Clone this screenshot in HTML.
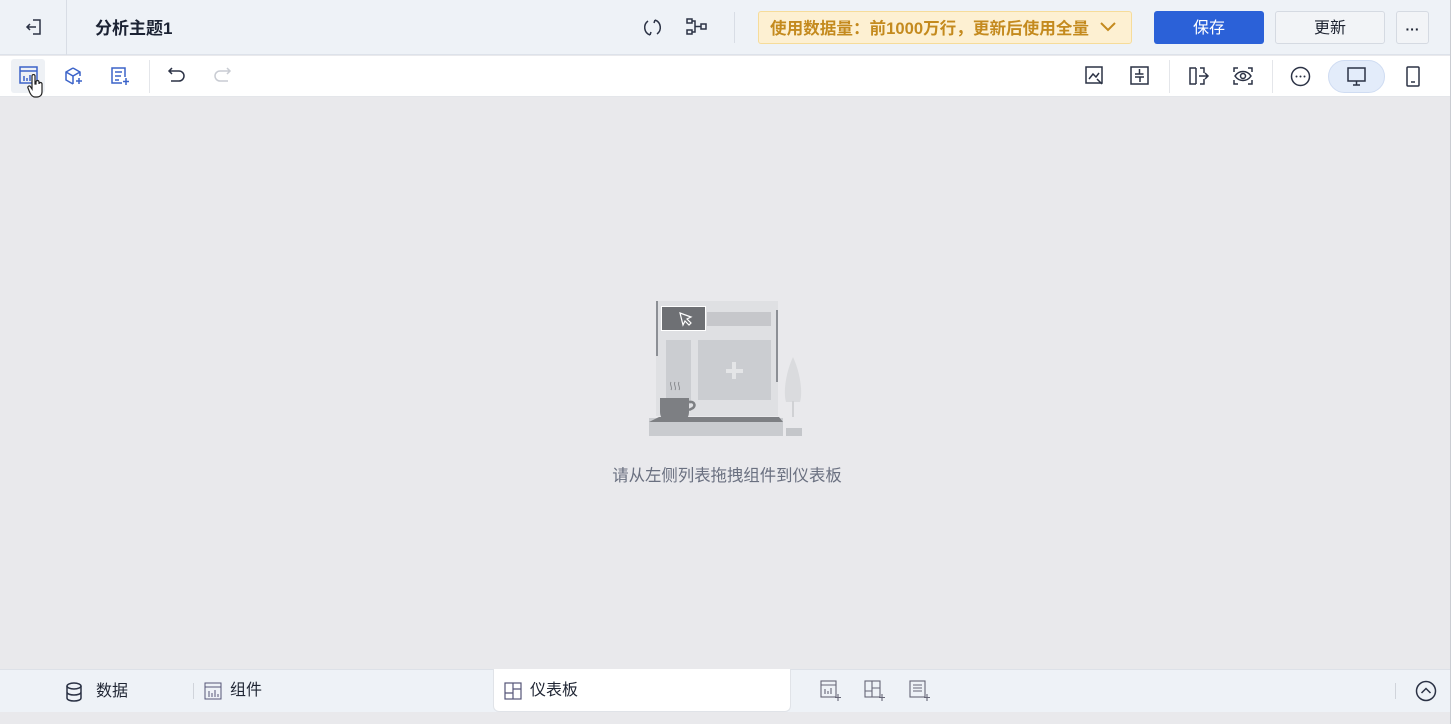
<!DOCTYPE html>
<html><head><meta charset="utf-8"><style>
*{box-sizing:border-box;margin:0;padding:0}
body{width:1454px;height:724px;overflow:hidden;background:#e9e9ec;font-family:"Liberation Sans","Noto Sans CJK SC",sans-serif;position:relative;color:#1f2533}
.abs{position:absolute}
svg{position:absolute;fill:none;stroke:#2b3245;stroke-width:1.5}
.btn{position:absolute;border-radius:3px;font-size:16px;display:flex;align-items:center;justify-content:center;line-height:1;padding-top:2px}
</style></head><body>
<div class="abs" style="left:0;top:0;width:1454px;height:55px;background:#eef2f7;border-bottom:1px solid #dde2ea"></div>
<div class="abs" style="left:66px;top:0;width:1px;height:55px;background:#d8dde5"></div>
<svg style="left:24px;top:17px" width="20" height="20" viewBox="0 0 20 20"><path d="M9 3h7v14H9M3 10h9M6 7l-3 3 3 3"/></svg>
<div class="abs" style="left:95px;top:16px;font-size:17px;font-weight:bold;color:#1b2233;line-height:26px">分析主题1</div>
<svg style="left:642px;top:17px" width="21" height="21" viewBox="0 0 21 21"><path d="M6 4A8 8 0 0 0 8 18M15 17A8 8 0 0 0 13 3M13 3l-1 3M8 18l1-3"/></svg>
<svg style="left:686px;top:18px" width="22" height="18" viewBox="0 0 22 18"><rect x="1" y="1" width="5" height="4"/><rect x="1" y="12" width="5" height="4"/><rect x="15" y="6" width="5" height="5"/><path d="M6 3h3v11H6M9 8.5h6"/></svg>
<div class="abs" style="left:734px;top:12px;width:1px;height:31px;background:#d8dde5"></div>
<div class="abs" style="left:758px;top:11px;width:374px;height:33px;background:#fdf0d2;border:1px solid #f6dc9a;border-radius:3px;color:#c48a1e;font-size:16.6px;padding:1px 0 0 11px;line-height:31px;font-weight:bold">使用数据量：前1000万行，更新后使用全量</div>
<svg style="left:1098px;top:19px;stroke:#c48a1e;stroke-width:2" width="20" height="16" viewBox="0 0 20 16"><path d="M3 4l7 7 7-7"/></svg>
<div class="btn" style="left:1154px;top:11px;width:110px;height:33px;background:#2b61d8;color:#fff">保存</div>
<div class="btn" style="left:1275px;top:11px;width:110px;height:33px;background:#f2f4f7;border:1px solid #d5dae2;color:#1f2533">更新</div>
<div class="btn" style="left:1396px;top:11px;width:33px;height:33px;background:#f2f4f7;border:1px solid #d5dae2;color:#1f2533;font-weight:bold;font-size:14px">···</div>
<div class="abs" style="left:0;top:56px;width:1454px;height:41px;background:#fff;border-bottom:1px solid #e4e6ea"></div>
<div class="abs" style="left:11px;top:59px;width:34px;height:34px;background:#eef1f5;border-radius:3px"></div>
<svg style="left:19px;top:66px;stroke:#3b63c9" width="20" height="20" viewBox="0 0 20 20"><rect x="1" y="1" width="17" height="16"/><path d="M1 5h17M5 10v5M8 12v3M11 9v6"/></svg>
<svg style="left:64px;top:66px;stroke:#3b63c9" width="20" height="20" viewBox="0 0 20 20"><path d="M9 2l7 4v4M9 2L2 6v8l7 4M2 6l7 4 7-4M9 10v8M15 12v6M12 15h6"/></svg>
<svg style="left:110px;top:66px;stroke:#3b63c9" width="20" height="20" viewBox="0 0 20 20"><path d="M12 17H2V2h13v9M5 6h7M5 10h6M5 14h4M16 12v7M13 15.5h6"/></svg>
<div class="abs" style="left:149px;top:60px;width:1px;height:33px;background:#e4e6ea"></div>
<svg style="left:167px;top:66px" width="20" height="18" viewBox="0 0 20 18"><path d="M5 2L2 5l3 3M2 5h10a5 5 0 0 1 0 10H4"/></svg>
<svg style="left:212px;top:66px;stroke:#c9ccd3" width="20" height="18" viewBox="0 0 20 18"><path d="M15 2l3 3-3 3M18 5H8a5 5 0 0 0 0 10h8"/></svg>
<svg style="left:27px;top:74px;fill:#fff;stroke:#222;stroke-width:1.2" width="18" height="24" viewBox="0 0 18 24"><path d="M5 2a1.5 1.5 0 0 1 3 0v8h1V8a1.5 1.5 0 0 1 3 0v2a1.5 1.5 0 0 1 3 0v8c0 3-2 5-5 5H8c-2 0-4-2-5-4l-2-5a1.4 1.4 0 0 1 2.5-1.3L5 15z"/></svg>
<svg style="left:1085px;top:66px" width="20" height="20" viewBox="0 0 20 20"><rect x="1" y="1" width="16" height="16"/><path d="M4 13l4-5 3 3 3-4M12 13l5 5"/></svg>
<svg style="left:1130px;top:66px" width="20" height="20" viewBox="0 0 20 20"><rect x="1" y="1" width="17" height="17"/><path d="M9.5 3v5H5M10 16v-5h4M9.5 8h4M10 11H5"/></svg>
<div class="abs" style="left:1169px;top:60px;width:1px;height:33px;background:#e4e6ea"></div>
<svg style="left:1188px;top:66px" width="22" height="20" viewBox="0 0 22 20"><path d="M8 2H2v16h6M12 2h4v5M12 18h4v-5M8 2v16M11 10h9M17 7l3 3-3 3"/></svg>
<svg style="left:1232px;top:66px" width="22" height="20" viewBox="0 0 22 20"><path d="M2 6V2h4M16 2h4v4M20 14v4h-4M6 18H2v-4M3 10c4-6 12-6 16 0-4 6-12 6-16 0z"/><circle cx="11" cy="10" r="2.5"/></svg>
<div class="abs" style="left:1272px;top:60px;width:1px;height:33px;background:#e4e6ea"></div>
<svg style="left:1290px;top:66px" width="21" height="21" viewBox="0 0 21 21"><circle cx="10.5" cy="10.5" r="9"/><circle cx="6.5" cy="10.5" r="1" fill="#2b3245" stroke="none"/><circle cx="10.5" cy="10.5" r="1" fill="#2b3245" stroke="none"/><circle cx="14.5" cy="10.5" r="1" fill="#2b3245" stroke="none"/></svg>
<div class="abs" style="left:1328px;top:60px;width:57px;height:33px;background:#e3ecfa;border:1px solid #cfdcf2;border-radius:17px"></div>
<svg style="left:1346px;top:66px" width="21" height="21" viewBox="0 0 21 21"><rect x="2" y="2" width="17" height="13"/><path d="M10.5 15v4M7 19h7"/></svg>
<svg style="left:1405px;top:66px" width="16" height="21" viewBox="0 0 16 21"><rect x="2" y="1" width="12" height="19" rx="1"/><path d="M6 16h4"/></svg>
<div class="abs" style="left:1450px;top:0;width:4px;height:724px;background:#fff;border-left:1px solid #c9ccd2"></div>
<div class="abs" style="left:656px;top:301px;width:122px;height:115px;background:#dfe0e3"></div>
<div class="abs" style="left:656px;top:301px;width:2px;height:55px;background:#8c8f95"></div>
<div class="abs" style="left:776px;top:310px;width:2px;height:72px;background:#8c8f95"></div>
<div class="abs" style="left:661px;top:306px;width:45px;height:25px;background:#6e7074;border:1px solid #fff"></div>
<svg style="left:678px;top:311px;stroke:#fff;stroke-width:1.2" width="16" height="16" viewBox="0 0 16 16"><path d="M2 2l11 4-4 2 4 4-2 2-4-4-2 4z"/></svg>
<div class="abs" style="left:707px;top:312px;width:64px;height:14px;background:#c6c7cb"></div>
<div class="abs" style="left:666px;top:340px;width:25px;height:64px;background:#cbcdd1"></div>
<div class="abs" style="left:698px;top:340px;width:73px;height:60px;background:#cbcdd1"></div>
<div class="abs" style="left:732px;top:362px;width:4px;height:17px;background:#e4e5e7"></div>
<div class="abs" style="left:726px;top:368.5px;width:17px;height:4px;background:#e4e5e7"></div>
<svg style="left:781px;top:357px;stroke:none" width="26" height="60" viewBox="0 0 26 60"><path d="M12 0C5 15 2 35 5 45h14c3-10 0-30-7-45z" fill="#dadbde"/><rect x="11" y="44" width="2" height="16" fill="#d0d1d4"/></svg>
<div class="abs" style="left:649px;top:418px;width:134px;height:18px;background:#c9cbcf"></div>
<svg style="left:649px;top:417px;stroke:none" width="134" height="8" viewBox="0 0 134 8"><path d="M10 0h120l4 5H0z" fill="#7d7f83"/></svg>
<div class="abs" style="left:786px;top:428px;width:16px;height:8px;background:#c4c6ca"></div>
<svg style="left:660px;top:380px;stroke:#8a8c90;stroke-width:1" width="40" height="45" viewBox="0 0 40 45"><path d="M11 2c-2 3 2 5 0 8M15 2c-2 3 2 5 0 8M19 2c-2 3 2 5 0 8"/><path d="M0 18h29v14c0 6-4 10-10 10H10C4 42 0 38 0 32z" fill="#7d7f83" stroke="none"/><path d="M29 22c5-1 7 3 4 6l-4 2" stroke="#7d7f83" stroke-width="2.5"/></svg>
<div class="abs" style="left:0;top:465px;width:1454px;text-align:center;font-size:16.4px;line-height:22px;color:#6a7080">请从左侧列表拖拽组件到仪表板</div>
<div class="abs" style="left:0;top:669px;width:1450px;height:43px;background:#eef2f7;border-top:1px solid #dde1e8"></div>
<div class="abs" style="left:0;top:712px;width:1450px;height:12px;background:#e9e9ec"></div>
<svg style="left:65px;top:682px" width="18" height="20" viewBox="0 0 18 20"><ellipse cx="9" cy="4" rx="7" ry="3"/><path d="M2 4v12c0 4 14 4 14 0V4M2 10c0 4 14 4 14 0"/></svg>
<div class="abs" style="left:96px;top:681px;font-size:16px;line-height:22px">数据</div>
<div class="abs" style="left:193px;top:683px;width:1px;height:16px;background:#d0d4db"></div>
<svg style="left:204px;top:682px;stroke:#557;stroke-width:1" width="18" height="18" viewBox="0 0 18 18"><rect x="1" y="1" width="16" height="16"/><path d="M1 5h16M5 15V9M8 15v-4M11 15V8M14 15v-3"/></svg>
<div class="abs" style="left:230px;top:680px;font-size:16px;line-height:22px">组件</div>
<div class="abs" style="left:493px;top:669px;width:298px;height:43px;background:#fff;border:1px solid #e0e3e8;border-top:none;border-radius:0 0 6px 6px"></div>
<svg style="left:504px;top:682px;stroke:#557;stroke-width:1.2" width="18" height="18" viewBox="0 0 18 18"><rect x="1" y="1" width="16" height="16"/><path d="M9 1v16M1 11h8M9 7h8"/></svg>
<div class="abs" style="left:530px;top:680px;font-size:16px;line-height:22px">仪表板</div>
<svg style="left:820px;top:680px;stroke:#667;stroke-width:1.1" width="22" height="22" viewBox="0 0 22 22"><rect x="1" y="1" width="15" height="16"/><path d="M1 5h15M5 14V9M8 14v-3M11 14V8M18 14v7M15 17.5h6"/></svg>
<svg style="left:864px;top:680px;stroke:#667;stroke-width:1.1" width="22" height="22" viewBox="0 0 22 22"><rect x="1" y="1" width="15" height="16"/><path d="M8 1v16M1 11h7M8 8h8M18 14v7M15 17.5h6"/></svg>
<svg style="left:909px;top:680px;stroke:#667;stroke-width:1.1" width="22" height="22" viewBox="0 0 22 22"><rect x="1" y="1" width="15" height="16"/><path d="M4 5h9M4 8h9M4 11h9M18 14v7M15 17.5h6"/></svg>
<div class="abs" style="left:1395px;top:683px;width:1px;height:16px;background:#d0d4db"></div>
<svg style="left:1415px;top:680px" width="22" height="22" viewBox="0 0 22 22"><circle cx="11" cy="11" r="9.5"/><path d="M6.5 13l4.5-4.5 4.5 4.5"/></svg>
</body></html>
